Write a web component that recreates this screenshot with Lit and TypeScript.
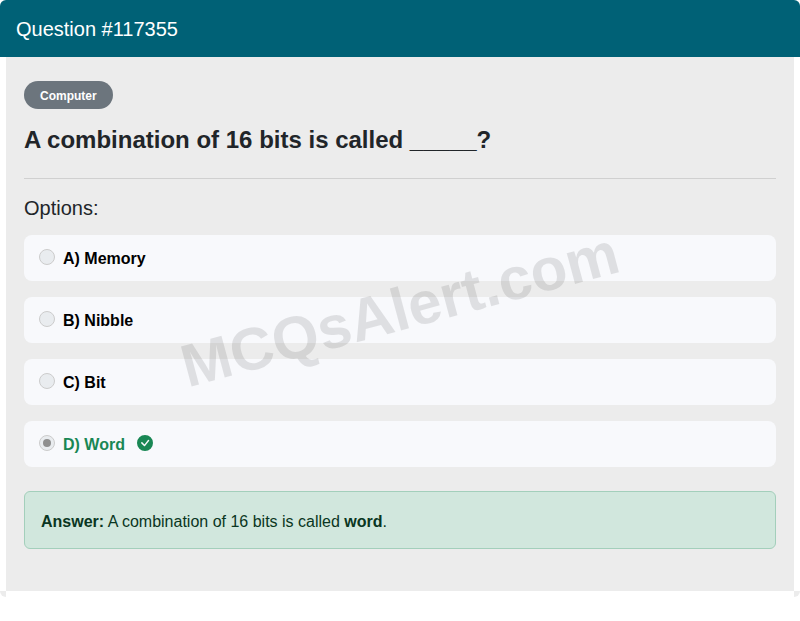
import { LitElement, html, css } from "lit";
import { customElement } from "lit/decorators.js";

const options = [
  { label: "A) Memory", correct: false },
  { label: "B) Nibble", correct: false },
  { label: "C) Bit", correct: false },
  { label: "D) Word", correct: true },
];

@customElement("app-root")
export class AppRoot extends LitElement {
  static styles = css`
    :host {
      display: block;
      width: 800px;
      height: 621px;
      background: #fff;
      font-family: Arial, "Liberation Sans", sans-serif;
      color: #212529;
      overflow: hidden;
    }
    .card {
      position: relative;
      height: 597px;
      display: flex;
      flex-direction: column;
    }
    .head {
      height: 57px;
      box-sizing: border-box;
      background: #006176;
      color: #fff;
      font-size: 20px;
      line-height: 24px;
      padding: 17px 16px 16px;
      border-radius: 6px 6px 0 0;
      flex: none;
    }
    .body {
      height: 534px;
      box-sizing: border-box;
      margin: 0 6px;
      background: #ececec;
      padding: 24px 18px;
      flex: none;
    }
    .corners {
      display: flex;
      justify-content: space-between;
      height: 6px;
      flex: none;
    }
    .corner {
      width: 6px;
      height: 6px;
      background: #ececec;
    }
    .corner.l { border-bottom-left-radius: 6px; }
    .corner.r { border-bottom-right-radius: 6px; }
    .badge {
      display: inline-block;
      background: #6c757d;
      color: #fff;
      font-size: 12px;
      font-weight: 700;
      line-height: 14px;
      padding: 8px 16px 6px;
      border-radius: 14px;
      height: 14px;
      vertical-align: top;
    }
    .badge-row { height: 28px; }
    h2 {
      margin: 16px 0 0;
      font-size: 24px;
      font-weight: 700;
      line-height: 30px;
      color: #212529;
    }
    hr {
      margin: 23px 0 0;
      border: 0;
      border-top: 1px solid #d0d0d0;
    }
    h3 {
      margin: 17px 0 0;
      font-size: 20px;
      font-weight: 400;
      line-height: 24px;
    }
    .opts {
      margin-top: 15px;
      display: flex;
      flex-direction: column;
      gap: 16px;
    }
    .opt {
      height: 46px;
      box-sizing: border-box;
      border-radius: 8px;
      background: #f8f9fc;
      display: flex;
      align-items: center;
      padding: 0 15px;
      font-size: 16px;
      font-weight: 700;
      color: #000;
    }
    .opt.ok { color: #198754; }
    .label { margin-top: 2px; }
    .radio {
      width: 16px;
      height: 16px;
      box-sizing: border-box;
      border-radius: 50%;
      background: #e9ecef;
      border: 1px solid #ccc;
      margin: -2px 8px 0 0;
      display: flex;
      align-items: center;
      justify-content: center;
      flex: none;
    }
    .radio.on::after {
      content: "";
      width: 8px;
      height: 8px;
      border-radius: 50%;
      background: #8f8f8f;
    }
    .check { margin: -2px 0 0 12px; display: block; }
    .answer {
      margin-top: 24px;
      height: 58px;
      box-sizing: border-box;
      border: 1px solid #a3cfbb;
      border-radius: 6px;
      background: #d1e7dd;
      color: #0a3622;
      font-size: 16px;
      line-height: 24px;
      padding: 18px 16px 14px;
    }
    .mark {
      position: absolute;
      left: 400px;
      top: 310px;
      transform: translate(-50%, -50%) rotate(-15deg);
      font-size: 60px;
      font-weight: 700;
      line-height: 70px;
      white-space: nowrap;
      color: rgba(0, 0, 0, 0.1);
      pointer-events: none;
    }
  `;

  render() {
    return html`
      <div class="card">
        <div class="head">Question #117355</div>
        <div class="body">
          <div class="badge-row"><span class="badge">Computer</span></div>
          <h2>A combination of 16 bits is called _____?</h2>
          <hr />
          <h3>Options:</h3>
          <div class="opts">
            ${options.map(
              (o) => html`
                <div class="opt ${o.correct ? "ok" : ""}">
                  <span class="radio ${o.correct ? "on" : ""}"></span>
                  <span class="label">${o.label}</span>
                  ${o.correct
                    ? html`<svg class="check" width="16" height="16" viewBox="0 0 16 16" fill="#198754">
                        <path d="M16 8A8 8 0 1 1 0 8a8 8 0 0 1 16 0zm-3.97-3.03a.75.75 0 0 0-1.08.022L7.477 9.417 5.384 7.323a.75.75 0 0 0-1.06 1.06L6.97 11.03a.75.75 0 0 0 1.079-.02l3.992-4.99a.75.75 0 0 0-.01-1.05z" />
                      </svg>`
                    : ""}
                </div>
              `
            )}
          </div>
          <div class="answer"><b>Answer:</b> A combination of 16 bits is called <b>word</b>.</div>
        </div>
        <div class="corners"><span class="corner l"></span><span class="corner r"></span></div>
        <div class="mark">MCQsAlert.com</div>
      </div>
    `;
  }
}
